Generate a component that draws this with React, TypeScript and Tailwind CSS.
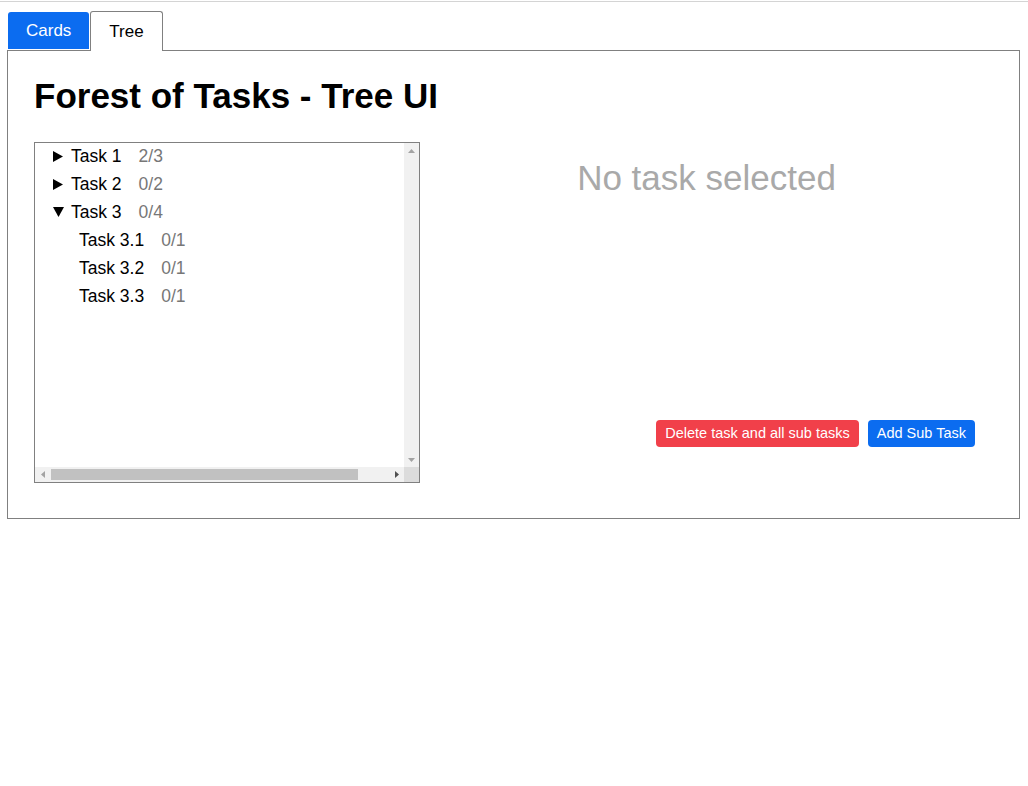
import React from "react";

interface TaskNode {
  name: string;
  done: number;
  total: number;
  open?: boolean;
  children?: TaskNode[];
}

const forest: TaskNode[] = [
  { name: "Task 1", done: 2, total: 3, children: [] },
  { name: "Task 2", done: 0, total: 2, children: [] },
  {
    name: "Task 3",
    done: 0,
    total: 4,
    open: true,
    children: [
      { name: "Task 3.1", done: 0, total: 1 },
      { name: "Task 3.2", done: 0, total: 1 },
      { name: "Task 3.3", done: 0, total: 1 },
    ],
  },
];

function Caret({ open }: { open?: boolean }) {
  if (open) {
    return (
      <svg width="11" height="10" viewBox="0 0 11 10" className="mr-[7px] shrink-0">
        <polygon points="0,0 11,0 5.5,10" fill="black" />
      </svg>
    );
  }
  return (
    <svg width="10" height="11" viewBox="0 0 10 11" className="mr-[8px] shrink-0">
      <polygon points="0,0 10,5.5 0,11" fill="black" />
    </svg>
  );
}

function Row({ task, depth }: { task: TaskNode; depth: number }) {
  const hasKids = task.children !== undefined;
  return (
    <>
      <div className="flex items-center h-7 pb-[2px] cursor-pointer whitespace-nowrap">
        {depth === 0 ? (
          <div className="flex items-center pl-[18px]">
            {hasKids && <Caret open={task.open} />}
            <span className="text-black">{task.name}</span>
          </div>
        ) : (
          <div className="pl-[44px] text-black">{task.name}</div>
        )}
        <span className="ml-[17px] text-[#777]">
          {task.done}/{task.total}
        </span>
      </div>
      {task.open &&
        task.children?.map((child) => (
          <Row key={child.name} task={child} depth={depth + 1} />
        ))}
    </>
  );
}

// classic scrollbar arrow, drawn since the page has no native scrollbars
function Arrow({ dir, dark }: { dir: "up" | "down" | "left" | "right"; dark?: boolean }) {
  const fill = dark ? "#505050" : "#a3a3a3";
  const pts = {
    up: "0,4 3.5,0 7,4",
    down: "0,0 7,0 3.5,4",
    left: "4,0 4,7 0,3.5",
    right: "0,0 4,3.5 0,7",
  }[dir];
  const vertical = dir === "up" || dir === "down";
  return (
    <div className="w-[15px] h-[15px] flex items-center justify-center shrink-0">
      <svg width={vertical ? 7 : 4} height={vertical ? 4 : 7} viewBox={vertical ? "0 0 7 4" : "0 0 4 7"}>
        <polygon points={pts} fill={fill} />
      </svg>
    </div>
  );
}

function TreeBox() {
  return (
    <div className="w-[386px] h-[341px] border border-[#808080] flex flex-col shrink-0 text-[17.5px]">
      <div className="flex flex-1 min-h-0">
        <div className="flex-1 overflow-hidden">
          {forest.map((t) => (
            <Row key={t.name} task={t} depth={0} />
          ))}
        </div>
        <div className="w-[15px] bg-[#f1f1f1] flex flex-col justify-between">
          <Arrow dir="up" />
          <Arrow dir="down" />
        </div>
      </div>
      <div className="h-[15px] flex">
        <div className="flex-1 bg-[#f1f1f1] flex items-center">
          <Arrow dir="left" />
          <div className="flex-1 flex items-center">
            <div className="ml-px w-[307px] h-[11px] bg-[#c1c1c1]" />
          </div>
          <Arrow dir="right" dark />
        </div>
        <div className="w-[15px] bg-[#dcdcdc]" />
      </div>
    </div>
  );
}

export default function App() {
  return (
    <div className="min-h-[786px] bg-white font-['Liberation_Sans',Arial,sans-serif] text-[17px]">
      <div className="pt-px">
        <div className="h-px bg-[#d4d4d4]" />
      </div>

      <div className="pl-[7px] pr-[8px] pt-[9px]">
        {/* tabs */}
        <div className="flex items-end pl-px">
          <button className="h-[37px] mb-px pt-px px-[18px] text-[17px] text-white bg-[#0b6cf0] rounded-t-[3px]">
            Cards
          </button>
          <button className="relative z-10 h-[40px] -mb-px ml-px px-[18px] text-[17px] text-black bg-white border border-b-0 border-[#808080] rounded-t-[3px]">
            Tree
          </button>
        </div>

        {/* panel */}
        <div className="border border-[#808080] px-[26px] pt-[25px] pb-[35px]">
          <h1 className="text-[35px] leading-[40px] font-bold text-black mb-[26px]">
            Forest of Tasks - Tree UI
          </h1>

          <div className="flex">
            <TreeBox />

            <div className="flex-1 flex flex-col h-[341px]">
              <div className="mt-[16px] text-center text-[35px] leading-[40px] text-[#a9a9a9]">
                No task selected
              </div>
              <div className="mt-auto mb-[36px] mr-[18px] flex justify-end gap-[9px]">
                <button className="h-[27px] px-[9px] rounded-[4px] bg-[#f1404a] text-white text-[14.5px]">
                  Delete task and all sub tasks
                </button>
                <button className="h-[27px] px-[9px] rounded-[4px] bg-[#0b6cf0] text-white text-[14.5px]">
                  Add Sub Task
                </button>
              </div>
            </div>
          </div>
        </div>
      </div>
    </div>
  );
}
